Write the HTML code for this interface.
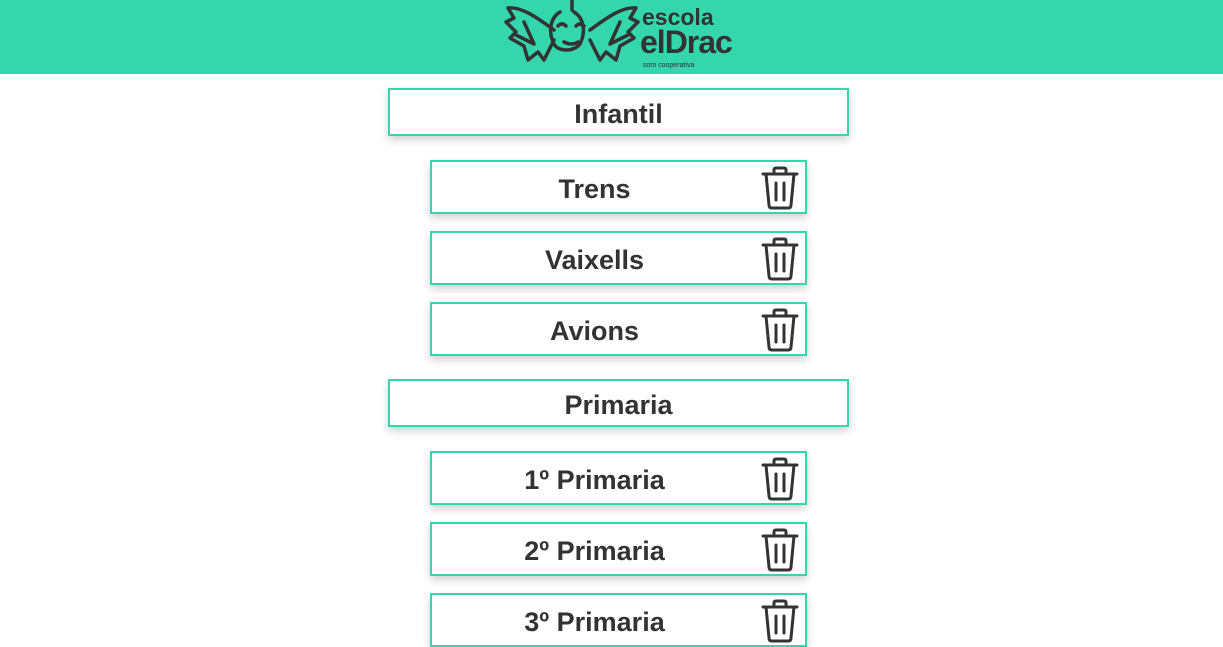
<!DOCTYPE html>
<html><head><meta charset="utf-8"><style>
*{margin:0;padding:0;box-sizing:border-box}
body{width:1223px;height:629px;overflow:hidden;background:#fff;font-family:"Liberation Sans",sans-serif;color:#333;position:relative}
.hdr{position:absolute;left:0;top:0;width:1223px;height:74px;background:#34d6ab}
.cat,.it{position:absolute;border:2px solid #34d6ab;background:#fff;box-shadow:0 4px 8px rgba(0,0,0,.18);font-weight:bold;font-size:27px;display:flex;align-items:center;justify-content:center;padding-top:4px}
.cat{left:388px;width:461px;height:48px}
.it{left:430px;width:377px;height:54px}
.it span{position:absolute;left:0;width:325px;text-align:center}
.it svg{position:absolute;left:329px;top:4px}
</style></head><body>
<div class="hdr">
<svg width="240" height="74" viewBox="0 0 240 74" style="position:absolute;left:500px;top:0" fill="none" stroke="#333" stroke-width="3.5" stroke-linecap="round" stroke-linejoin="round">
<path d="M72 0v10M60 12c-10 6-12 20-6 32 4 8 20 8 26 0 6-12 4-26-6-32"/>
<path d="M58 26q4-4 8 0M76 26q4-4 8 0M64 42q8 4 14 0"/>
<path d="M54 30C40 20 22 6 8 8l6 10-8 4 10 10-6 6 14 8 4 14 10-8 6 8 10-20M24 22l10 22M14 34l20 10"/>
<path d="M90 30c14-10 32-24 46-22l-6 10 8 4-10 10 6 6-14 8-4 14-10-8-6 8-10-20M120 22l-10 22M130 34l-20 10"/>
<text x="142" y="25" font-family="Liberation Sans" font-weight="bold" font-size="23" fill="#333" stroke="none">escola</text>
<text x="140" y="53" font-family="Liberation Sans" font-weight="bold" font-size="32" fill="#333" stroke="none" letter-spacing="-1">elDrac</text>
<text x="143" y="67" font-family="Liberation Sans" font-size="7" fill="#333" stroke="none">som cooperativa</text>
</svg></div>
<div class="cat" style="top:88px">Infantil</div>
<div class="it" style="top:160px"><span>Trens</span><svg width="38" height="44" viewBox="0 0 38 44" fill="none" stroke="#333" stroke-width="3" stroke-linecap="round"><path d="M2 8h34M13 8V4q0-2 2-2h8q2 0 2 2v4M5 8l3 31q0 3 3 3h16q3 0 3-3l3-31M15 17v17M23 17v17"/></svg></div>
<div class="it" style="top:231px"><span>Vaixells</span><svg width="38" height="44" viewBox="0 0 38 44" fill="none" stroke="#333" stroke-width="3" stroke-linecap="round"><path d="M2 8h34M13 8V4q0-2 2-2h8q2 0 2 2v4M5 8l3 31q0 3 3 3h16q3 0 3-3l3-31M15 17v17M23 17v17"/></svg></div>
<div class="it" style="top:302px"><span>Avions</span><svg width="38" height="44" viewBox="0 0 38 44" fill="none" stroke="#333" stroke-width="3" stroke-linecap="round"><path d="M2 8h34M13 8V4q0-2 2-2h8q2 0 2 2v4M5 8l3 31q0 3 3 3h16q3 0 3-3l3-31M15 17v17M23 17v17"/></svg></div>
<div class="cat" style="top:379px">Primaria</div>
<div class="it" style="top:451px"><span>1º Primaria</span><svg width="38" height="44" viewBox="0 0 38 44" fill="none" stroke="#333" stroke-width="3" stroke-linecap="round"><path d="M2 8h34M13 8V4q0-2 2-2h8q2 0 2 2v4M5 8l3 31q0 3 3 3h16q3 0 3-3l3-31M15 17v17M23 17v17"/></svg></div>
<div class="it" style="top:522px"><span>2º Primaria</span><svg width="38" height="44" viewBox="0 0 38 44" fill="none" stroke="#333" stroke-width="3" stroke-linecap="round"><path d="M2 8h34M13 8V4q0-2 2-2h8q2 0 2 2v4M5 8l3 31q0 3 3 3h16q3 0 3-3l3-31M15 17v17M23 17v17"/></svg></div>
<div class="it" style="top:593px"><span>3º Primaria</span><svg width="38" height="44" viewBox="0 0 38 44" fill="none" stroke="#333" stroke-width="3" stroke-linecap="round"><path d="M2 8h34M13 8V4q0-2 2-2h8q2 0 2 2v4M5 8l3 31q0 3 3 3h16q3 0 3-3l3-31M15 17v17M23 17v17"/></svg></div>
</body></html>
